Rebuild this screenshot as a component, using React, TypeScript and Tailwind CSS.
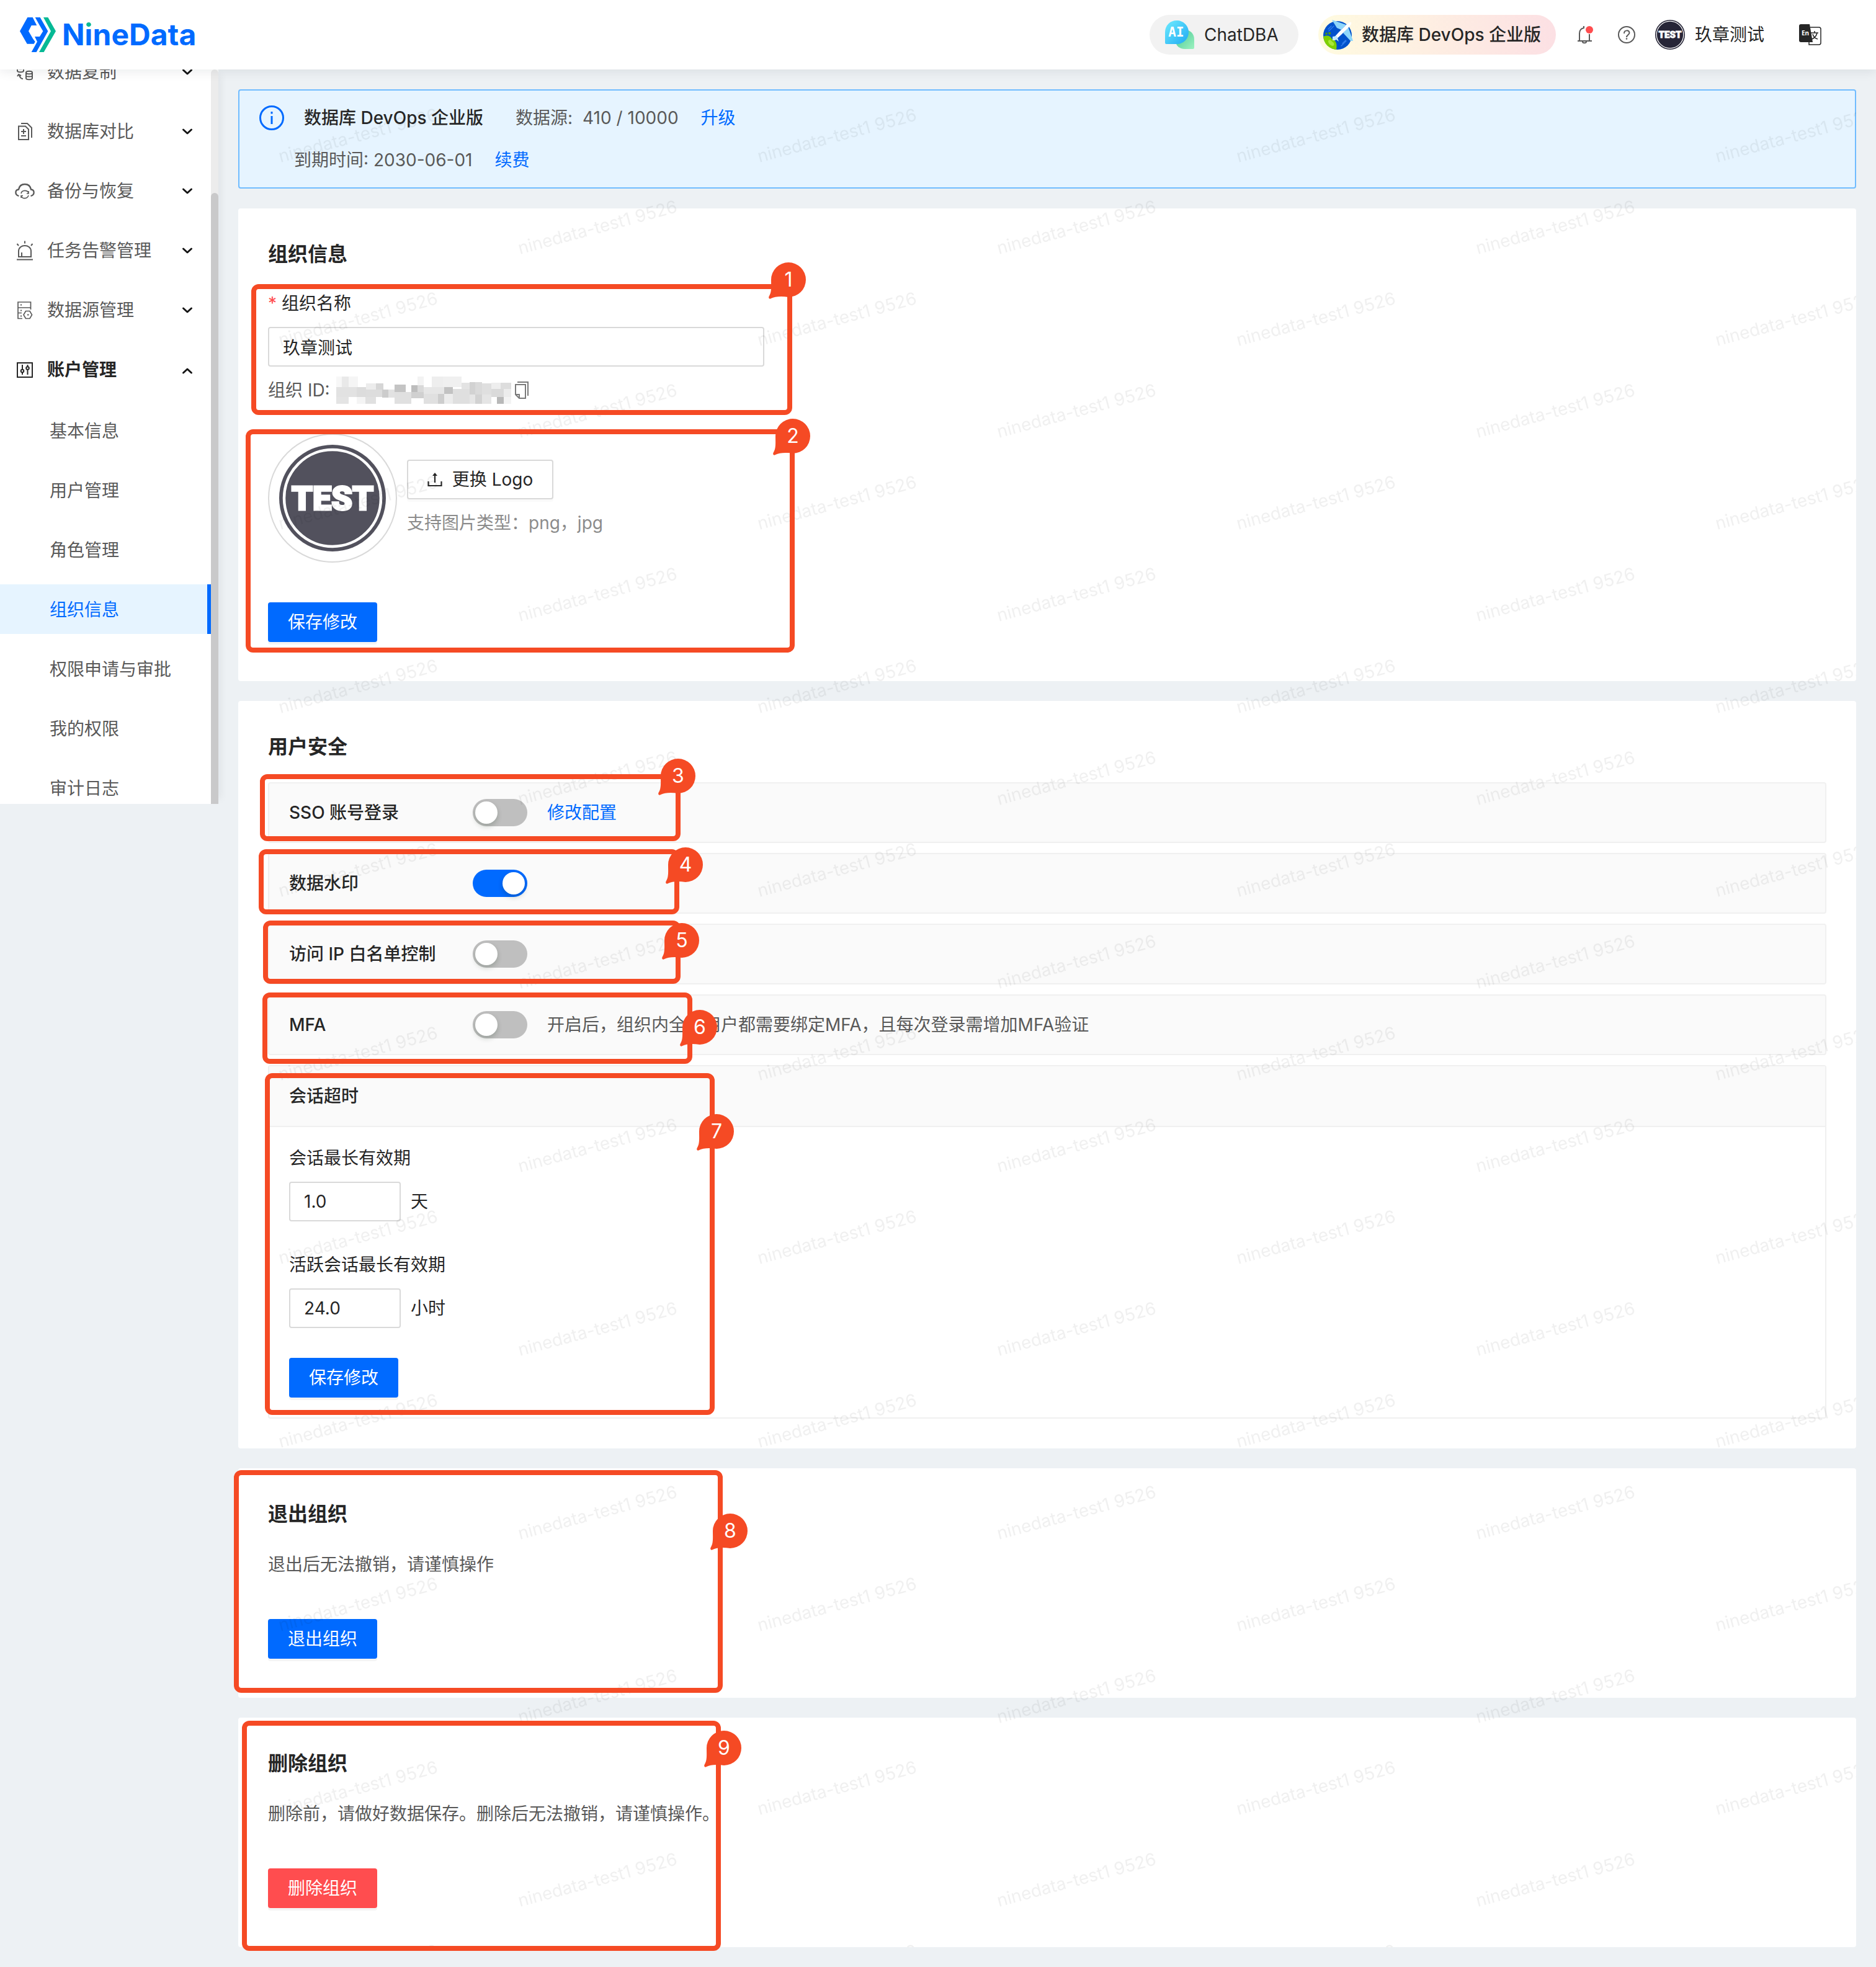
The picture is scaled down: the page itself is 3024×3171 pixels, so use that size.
import type { ReactNode } from "react";

const menuItems = [
  { label: "数据复制", icon: "replicate" },
  { label: "数据库对比", icon: "compare" },
  { label: "备份与恢复", icon: "backup" },
  { label: "任务告警管理", icon: "alarm" },
  { label: "数据源管理", icon: "source" },
  { label: "账户管理", icon: "account", open: true },
];

const subItems = ["基本信息", "用户管理", "角色管理", "组织信息", "权限申请与审批", "我的权限", "审计日志"];

// numbered callouts: frame box, then the centre of its bubble
const callouts = [
  { id: 1, x: 405, y: 458, w: 872, h: 211, cx: 1271, cy: 451 },
  { id: 2, x: 396, y: 692, w: 885, h: 360, cx: 1278, cy: 703 },
  { id: 3, x: 419, y: 1248, w: 678, h: 108, cx: 1093, cy: 1251 },
  { id: 4, x: 417, y: 1369, w: 678, h: 105, cx: 1105, cy: 1394 },
  { id: 5, x: 424, y: 1484, w: 673, h: 102, cx: 1099, cy: 1516 },
  { id: 6, x: 423, y: 1600, w: 693, h: 115, cx: 1128, cy: 1656 },
  { id: 7, x: 427, y: 1730, w: 725, h: 551, cx: 1155, cy: 1824 },
  { id: 8, x: 377, y: 2370, w: 788, h: 359, cx: 1177, cy: 2468 },
  { id: 9, x: 390, y: 2774, w: 772, h: 371, cx: 1167, cy: 2818 },
];

// x, y, width, height, grey
const mosaic: [number, number, number, number, string][] = [
  [0, 0, 15, 51, "#f7f7f7"], [15, 0, 18, 51, "#e9e9e9"], [33, 0, 24, 51, "#f5f5f5"],
  [0, 51, 54, 48, "#e2e2e2"], [0, 99, 33, 33, "#e4e4e4"], [54, 99, 23, 33, "#f4f4f4"], [77, 99, 27, 33, "#e0e0e0"],
  [54, 51, 24, 48, "#dcdcdc"], [78, 33, 27, 30, "#ececec"], [105, 33, 19, 30, "#d6d6d6"],
  [78, 63, 43, 36, "#dddddd"], [121, 63, 16, 39, "#cccccc"], [137, 63, 16, 39, "#e2e2e2"],
  [153, 39, 30, 36, "#c4c4c4"], [153, 75, 45, 57, "#e0e0e0"], [198, 42, 16, 33, "#bdbdbd"],
  [198, 75, 32, 30, "#d0d0d0"], [214, 0, 16, 42, "#f3f3f3"], [214, 42, 16, 33, "#d9d9d9"],
  [230, 51, 54, 33, "#e6e6e6"], [230, 84, 38, 48, "#e0e0e0"], [251, 0, 30, 51, "#eeeeee"], [281, 0, 50, 51, "#f0f0f0"],
  [268, 84, 16, 48, "#cdcdcd"], [284, 51, 23, 33, "#c2c2c2"], [284, 84, 23, 48, "#ececec"],
  [307, 60, 44, 72, "#dfdfdf"], [331, 30, 20, 30, "#e3e3e3"], [351, 27, 16, 60, "#d2d2d2"], [351, 87, 16, 45, "#e6e6e6"],
  [367, 27, 17, 60, "#dadada"], [367, 87, 17, 45, "#d2d2d2"], [384, 33, 24, 54, "#dfdfdf"], [384, 87, 24, 45, "#e5e5e5"],
  [408, 30, 25, 30, "#eeeeee"], [408, 60, 33, 39, "#dadada"], [423, 99, 18, 33, "#b8b8b8"],
  [433, 30, 28, 30, "#dddddd"], [441, 60, 20, 39, "#ececec"], [441, 99, 20, 33, "#f3f3f3"],
];

const LogoMark = () => (
  <svg width="58" height="56" viewBox="36 54 174 168" aria-hidden="true">
    <path fill="#006aff" d="M73 54H98L118 93H92L78 121L100 158L110 172L104 182H71L36 121Z" />
    <path fill="#006aff" d="M110 54H134L172 121L116 222H92L120 172L108 147H132L148 121L130 90Z" />
    <path fill="#05b995" d="M150 54H172L210 121L152 222H129L186 121Z" />
  </svg>
);

const ChatIcon = () => (
  <svg width="48" height="48" viewBox="0 0 48 48" aria-hidden="true">
    <defs>
      <linearGradient id="chat-blue" x1="0" y1="0" x2="1" y2="1">
        <stop offset="0.2" stopColor="#5fdffc" />
        <stop offset="1" stopColor="#1ea9f4" />
      </linearGradient>
      <linearGradient id="chat-green" x1="0" y1="0" x2="1" y2="1">
        <stop offset="0.3" stopColor="#5fd3a0" />
        <stop offset="1" stopColor="#9df2c0" />
      </linearGradient>
    </defs>
    <path fill="url(#chat-green)" d="M33 16C42 16 48 23 48 31V45Q48 47 46 47H33C24 47 18 41 18 34S24 16 33 16Z" />
    <path fill="url(#chat-blue)" d="M20 1C30 1 39 9 39 20S30 39 20 39H3Q1 39 1 37V20C1 9 9 1 20 1Z" />
    <text x="19" y="27" textAnchor="middle" fill="#fff" fontSize="21" fontWeight="700" fontFamily="DejaVu Sans Mono">AI</text>
  </svg>
);

const GlobeIcon = () => (
  <svg width="48" height="48" viewBox="0 0 48 48" aria-hidden="true">
    <circle cx="23" cy="25" r="23" fill="#0052cc" />
    <path fill="#7fd000" d="M0 27C7 24 12 26 14 31C20 33 23 38 21 48C10 47 1 39 0 27Z" />
    <path fill="#a9e83a" d="M8 34C9 31 13 32 14 35C19 37 18 42 15 42C11 41 8 38 8 34Z" />
    <path fill="#4f9d12" d="M3 22L6 20L7 23L4 24ZM8 20L12 20L12 23L9 24Z" />
    <path stroke="#2f7bea" strokeWidth="1.5" strokeLinecap="round" d="M8 15L13 10M9 18L17 10M29 42L37 34M31 38L36 33" />
    <path fill="#8ed6fb" d="M14 0L20 2L37 8L29 16L22 13Z" />
    <path fill="#8ed6fb" d="M40 11L46 28L48 34L44 34L32 21Z" />
    <path fill="#fff" d="M45 4C43 3 40 5 37 8L25 20L16 30L15 33L19 33L29 24L41 12C44 9 46 6 45 4Z" />
    <path fill="#bfe9ff" d="M15 27L22 26L25 35L21 32L15 33Z" />
  </svg>
);

const BellIcon = () => (
  <svg width="28" height="32" viewBox="0 0 28 32" fill="none" stroke="#595959" strokeWidth="2" aria-hidden="true">
    <path d="M11 2V5C6 6 4 10 4 14V26M20 15V26M1 26H24" />
    <path d="M9 27C9 30 15 30 15 27" />
    <circle cx="20" cy="8" r="6" fill="#ff4d4f" stroke="none" />
  </svg>
);

const HelpIcon = () => (
  <svg width="28" height="28" viewBox="0 0 28 28" fill="none" stroke="#595959" strokeWidth="2" aria-hidden="true">
    <circle cx="14" cy="14" r="13" />
    <path d="M10 12C10 6 18 6 18.500 11C18.500 14 14 14 14 18" />
    <circle cx="14" cy="20.500" r="1.300" fill="#595959" stroke="none" />
  </svg>
);

const LangIcon = () => (
  <svg width="36" height="36" viewBox="0 0 36 36" aria-hidden="true">
    <path fill="none" stroke="#262626" strokeWidth="1.500" d="M18 6H32Q35 6 35 9V31Q35 34 32 34H16V29" />
    <path fill="#262626" d="M3 1H17L22 30H3Q0 30 0 27V4Q0 1 3 1Z" />
    <path fill="none" stroke="#262626" strokeWidth="1.500" d="M19 15H31M25 12V15M29 15C28 20 25 23 21 25M22 17C23 21 26 24 30 25" />
    <text x="4" y="19" fill="#fff" fontSize="10" fontWeight="700" fontFamily="Noto Sans">En</text>
  </svg>
);

const TestBadge = ({ className, color }: { className: string; color: string }) => (
  <svg className={className} viewBox="0 0 172 172" role="img" aria-label="TEST">
    <circle cx="86" cy="86" r="86" fill={color} />
    <circle cx="86" cy="86" r="78" fill="none" stroke="#fff" strokeWidth="4.500" />
    <text x="86" y="105" textAnchor="middle" fill="#fff" stroke="#fff" strokeWidth="3" fontSize="54" fontWeight="900" fontFamily="Roboto, sans-serif">
      TEST
    </text>
  </svg>
);

const MenuIcon = ({ name }: { name: string }) => (
  <svg className="size-8 shrink-0" viewBox="0 0 32 32" fill="none" stroke="currentColor" strokeWidth="2" aria-hidden="true">
    {name === "replicate" && (
      <>
        <path d="M4 5V14C4 17 14 17 14 14V5M4 9C4 12 14 12 14 9" />
        <path d="M18 17V26C18 29 28 29 28 26V17C28 14 18 14 18 17C18 20 28 20 28 17M18 22C18 24 28 24 28 22" />
        <path d="M13 27C10 27 8 25 7 21M4 23L6 20L10 22" />
      </>
    )}
    {name === "compare" && (
      <>
        <path d="M6 7.500H17L22 12.500V29H6Z" />
        <path d="M10 3H20L27 10V26M14 12V20M10 16H18M10 23H18" />
      </>
    )}
    {name === "backup" && (
      <>
        <path d="M6.500 24C-0.500 22 0 14 6 13.500C7 8 11 5 16 5S25 8 26 13.500C32 14 32.500 22 25.500 24" strokeWidth="2.300" />
        <path d="M10 20C11 14 20 14 22 19M22 23C20 29 12 29 10 24M22 16V20H19M10 27V23.500H13" strokeWidth="1.600" />
      </>
    )}
    {name === "alarm" && (
      <path d="M6 26V17C6 5 26 5 26 17V26ZM3 30.500H29M16 0.500V4.500M3.500 5L6 8M28.500 5L26 8M11 26V19" />
    )}
    {name === "source" && (
      <>
        <path d="M25.500 15V3H5V29.500H12M5 12H25M5 20.500H11" strokeWidth="1.700" />
        <path d="M17.500 17.500H24L27.500 23.500L24 29.500H17.500L14 23.500Z" strokeWidth="1.700" />
        <path d="M9 7.500H11M9 16.500H11M9 25.500H11M20 23.500H22.500" />
      </>
    )}
    {name === "account" && (
      <>
        <path d="M4 5H28V28H4Z" />
        <path d="M12 8V15.500M12 20.500V24M20.500 8V11M20.500 16V24" />
        <circle cx="12" cy="18" r="2.300" />
        <circle cx="20.500" cy="13.500" r="2.300" />
      </>
    )}
  </svg>
);

const Chevron = ({ up }: { up?: boolean }) => (
  <svg className="size-5 shrink-0" viewBox="0 0 20 20" fill="none" stroke="#141414" strokeWidth="3" strokeLinecap="round" strokeLinejoin="round" aria-hidden="true">
    <path d={up ? "M3.500 15L10 9L16.500 15" : "M3.500 7L10 13L16.500 7"} />
  </svg>
);

const Card = ({ title, className, children }: { title: string; className: string; children: ReactNode }) => (
  <section className={`rounded bg-white px-12 pt-12 ${className}`}>
    <h2 className="mb-[31px] text-[32px] leading-[52px] font-semibold">{title}</h2>
    {children}
  </section>
);

const Button = ({ danger, children }: { danger?: boolean; children: ReactNode }) => (
  <button
    type="button"
    className={`block h-16 w-44 rounded text-white shadow-[0_4px_0_rgba(0,0,0,0.045)] ${danger ? "bg-[#ff4d4f]" : "bg-[#006aff]"}`}
  >
    {children}
  </button>
);

const SwitchRow = ({ id, label, on, children }: { id: string; label: string; on?: boolean; children?: ReactNode }) => (
  <div className="mb-4 flex h-[98px] items-center rounded border-2 border-[#f0f0f0] bg-[#fafafa] px-8">
    <label htmlFor={id} className="w-74 font-medium">{label}</label>
    <input
      id={id}
      type="checkbox"
      role="switch"
      defaultChecked={on}
      className="mr-8 h-11 w-22 appearance-none rounded-full bg-[#bfbfbf] p-1 before:block before:size-9 before:rounded-full before:bg-white before:shadow-[0_4px_8px_rgba(0,35,11,0.2)] checked:bg-[#006aff] checked:before:ml-auto"
    />
    {children}
  </div>
);

const TimeField = ({ id, label, value, unit }: { id: string; label: string; value: string; unit: string }) => (
  <div className="mb-12">
    <label htmlFor={id} className="mb-4 block">{label}</label>
    <div className="flex items-center gap-4">
      <input id={id} type="text" defaultValue={value} className="h-16 w-45 rounded border-2 border-[#d9d9d9] bg-white px-[22px]" />
      <span>{unit}</span>
    </div>
  </div>
);

const Header = () => (
  <header className="relative z-20 flex h-28 items-center bg-white pr-[88px] pl-8 shadow-[0_4px_16px_rgba(0,21,41,0.08)]">
    <a href="#home" className="flex items-center gap-2.5 text-[48px] leading-none font-bold text-[#006aff]">
      <LogoMark />
      <span>
        N<span className="bg-[linear-gradient(#05b995_30%,#006aff_30%)] bg-clip-text text-transparent">i</span>neData
      </span>
    </a>
    <div className="ml-auto flex items-center">
      <button type="button" className="mr-8 flex h-16 w-60 items-center gap-4 rounded-full bg-[#f2f2f2] pl-6">
        <ChatIcon />
        ChatDBA
      </button>
      <button type="button" className="mr-[34px] flex h-16 items-center gap-3.5 rounded-full bg-linear-to-r from-[#fffbe0] to-[#fce0e4] pr-6 pl-2 font-medium">
        <GlobeIcon />
        数据库 DevOps 企业版
      </button>
      <button type="button" aria-label="通知" className="mr-[38px]"><BellIcon /></button>
      <button type="button" aria-label="帮助" className="mr-8"><HelpIcon /></button>
      <TestBadge className="mr-4 size-12" color="#262537" />
      <span className="mr-14">玖章测试</span>
      <button type="button" aria-label="语言"><LangIcon /></button>
    </div>
  </header>
);

const Sidebar = () => (
  <aside className="relative z-10 flex h-[1184px] w-[352px] shrink-0 overflow-hidden bg-white shadow-[12px_0_12px_-8px_rgba(0,21,41,0.06)]">
    <nav className="-mt-9 flex-1 text-[#595959]">
      <ul className="flex flex-col gap-4">
        {menuItems.map((item) => (
          <li key={item.label}>
            <button
              type="button"
              className={`flex h-20 w-full items-center gap-5 pr-7 pl-6 ${item.open ? "font-semibold text-[#262626]" : ""}`}
            >
              <MenuIcon name={item.icon} />
              <span className="flex-1 text-left">{item.label}</span>
              <Chevron up={item.open} />
            </button>
          </li>
        ))}
      </ul>
      <ul className="mt-[18px] flex flex-col gap-4">
        {subItems.map((label) => (
          <li key={label}>
            <a
              href="#org"
              className={`flex h-20 items-center pt-0.5 pl-20 ${label === "组织信息" ? "border-r-6 border-[#006aff] bg-[#e6f4ff] text-[#006aff]" : ""}`}
            >
              {label}
            </a>
          </li>
        ))}
      </ul>
    </nav>
    <div className="flex w-3 flex-col justify-end rounded-t-full bg-[#ececec]">
      <div className="h-[985px] rounded-t-full bg-[#c9c9ca]" />
    </div>
  </aside>
);

const Watermark = () => (
  <svg className="pointer-events-none absolute inset-0 size-full" aria-hidden="true">
    <defs>
      <pattern id="watermark" width="772" height="296" patternUnits="userSpaceOnUse">
        <g fill="#000" fillOpacity="0.06" fontSize="28">
          <text transform="translate(68 118) rotate(-15)">ninedata-test1 9526</text>
          <text transform="translate(454 266) rotate(-15)">ninedata-test1 9526</text>
        </g>
      </pattern>
    </defs>
    <rect width="100%" height="100%" fill="url(#watermark)" />
  </svg>
);

const Callouts = () => (
  <div className="pointer-events-none absolute inset-0 z-30">
    {callouts.map((c) => (
      <div key={c.id}>
        <div
          className="absolute rounded-xl border-8 border-[#f54a24]"
          style={{ left: c.x, top: c.y, width: c.w, height: c.h }}
        />
        <div
          className="absolute size-16 text-center text-[32px] leading-[60px] text-white"
          style={{ left: c.cx - 32, top: c.cy - 30 }}
        >
          <svg className="absolute inset-0 size-full" viewBox="2 0 64 64" aria-hidden="true">
            <path fill="#f54a24" d="M6 30A28 28 0 1 1 34 58C22 56 12 57 6 60C3 62 1 59 3 56C7 50 6 40 6 30Z" />
          </svg>
          <span className="relative">{c.id}</span>
        </div>
      </div>
    ))}
  </div>
);

export default function App() {
  return (
    <div className="relative min-h-screen bg-[#edf1f4] font-['Inter','Noto_Sans_CJK_SC',sans-serif] text-[28px] leading-[44px] text-[#262626]">
      <Header />
      <div className="flex items-start">
        <Sidebar />
        <main className="min-w-0 flex-1 p-8">
          <div className="relative flex flex-col gap-8">
            <div className="flex h-40 flex-col justify-center gap-6 rounded border-2 border-[#70bcff] bg-[#e6f4ff] pl-8 text-[#595959]">
              <div className="flex items-center">
                <svg className="mr-8 size-10" viewBox="0 0 40 40" fill="none" stroke="#006aff" strokeWidth="3" aria-hidden="true">
                  <circle cx="20" cy="20" r="18.500" />
                  <path d="M20 17V30M20 10V13.500" />
                </svg>
                <strong className="mr-13 font-medium text-[#262626]">数据库 DevOps 企业版</strong>
                <span className="mr-4">数据源:</span>
                <span className="mr-9">410 / 10000</span>
                <a href="#upgrade" className="text-[#006aff]">升级</a>
              </div>
              <div className="pl-14">
                <span className="mr-9">到期时间: 2030-06-01</span>
                <a href="#renew" className="text-[#006aff]">续费</a>
              </div>
            </div>

            <Card title="组织信息" className="pb-[63px]">
              <label htmlFor="org-name" className="mb-4 block">
                <span className="mr-2 text-[#ff4d4f]">*</span>组织名称
              </label>
              <input
                id="org-name"
                type="text"
                defaultValue="玖章测试"
                className="block h-16 w-200 rounded border-2 border-[#d9d9d9] px-[22px]"
              />
              <div className="mt-4 flex items-center text-[#595959]">
                <span className="mr-2.5">组织 ID:</span>
                <svg width="282" height="44" viewBox="0 0 461 132" preserveAspectRatio="none" shapeRendering="crispEdges" aria-hidden="true">
                  {mosaic.map(([x, y, w, h, fill]) => (
                    <rect key={`${x}-${y}`} x={x} y={y} width={w} height={h} fill={fill} />
                  ))}
                </svg>
                <button type="button" aria-label="复制" className="ml-1.5">
                  <svg width="22" height="28" viewBox="0 0 22 28" fill="none" stroke="#7a7a7a" strokeWidth="2" aria-hidden="true">
                    <path d="M1 5H17V27H7L1 21ZM1 21H7V27M4 1H21V23" />
                  </svg>
                </button>
              </div>
              <div className="mt-12 mb-16 flex items-center gap-4">
                <div className="flex size-52 items-center justify-center rounded-full border-2 border-[#d9d9d9]">
                  <TestBadge className="size-43" color="#52515d" />
                </div>
                <div>
                  <button type="button" className="mb-4 flex h-16 w-59 items-center justify-center gap-4 rounded border-2 border-[#d9d9d9] bg-white shadow-[0_4px_0_rgba(0,0,0,0.02)]">
                    <svg className="size-6" viewBox="0 0 24 24" fill="none" stroke="#262626" strokeWidth="2.200" aria-hidden="true">
                      <path d="M1.500 15V22H22.500V15M12 17V4" />
                      <path d="M12 1L16 6H8Z" fill="#262626" stroke="none" />
                    </svg>
                    更换 Logo
                  </button>
                  <p className="text-[#8c8c8c]">支持图片类型：png，jpg</p>
                </div>
              </div>
              <Button>保存修改</Button>
            </Card>

            <Card title="用户安全" className="pb-12">
              <SwitchRow id="sso" label="SSO 账号登录">
                <a href="#sso" className="text-[#006aff]">修改配置</a>
              </SwitchRow>
              <SwitchRow id="data-watermark" label="数据水印" on />
              <SwitchRow id="ip-whitelist" label="访问 IP 白名单控制" />
              <SwitchRow id="mfa" label="MFA">
                <span className="text-[#595959]">开启后，组织内全部用户都需要绑定MFA，且每次登录需增加MFA验证</span>
              </SwitchRow>
              <div className="rounded border-2 border-[#f0f0f0]">
                <h3 className="flex h-[98px] items-center border-b-2 border-[#f0f0f0] bg-[#fafafa] px-8 font-medium">会话超时</h3>
                <div className="px-8 pt-7 pb-8">
                  <TimeField id="session-max" label="会话最长有效期" value="1.0" unit="天" />
                  <TimeField id="active-max" label="活跃会话最长有效期" value="24.0" unit="小时" />
                  <Button>保存修改</Button>
                </div>
              </div>
            </Card>

            <Card title="退出组织" className="pb-[63px]">
              <p className="mb-16 leading-[48px] text-[#595959]">退出后无法撤销，请谨慎操作</p>
              <Button>退出组织</Button>
            </Card>

            <Card title="删除组织" className="pb-[63px]">
              <p className="mb-16 leading-[48px] text-[#595959]">删除前，请做好数据保存。删除后无法撤销，请谨慎操作。</p>
              <Button danger>删除组织</Button>
            </Card>

            <Watermark />
          </div>
        </main>
      </div>
      <Callouts />
    </div>
  );
}
